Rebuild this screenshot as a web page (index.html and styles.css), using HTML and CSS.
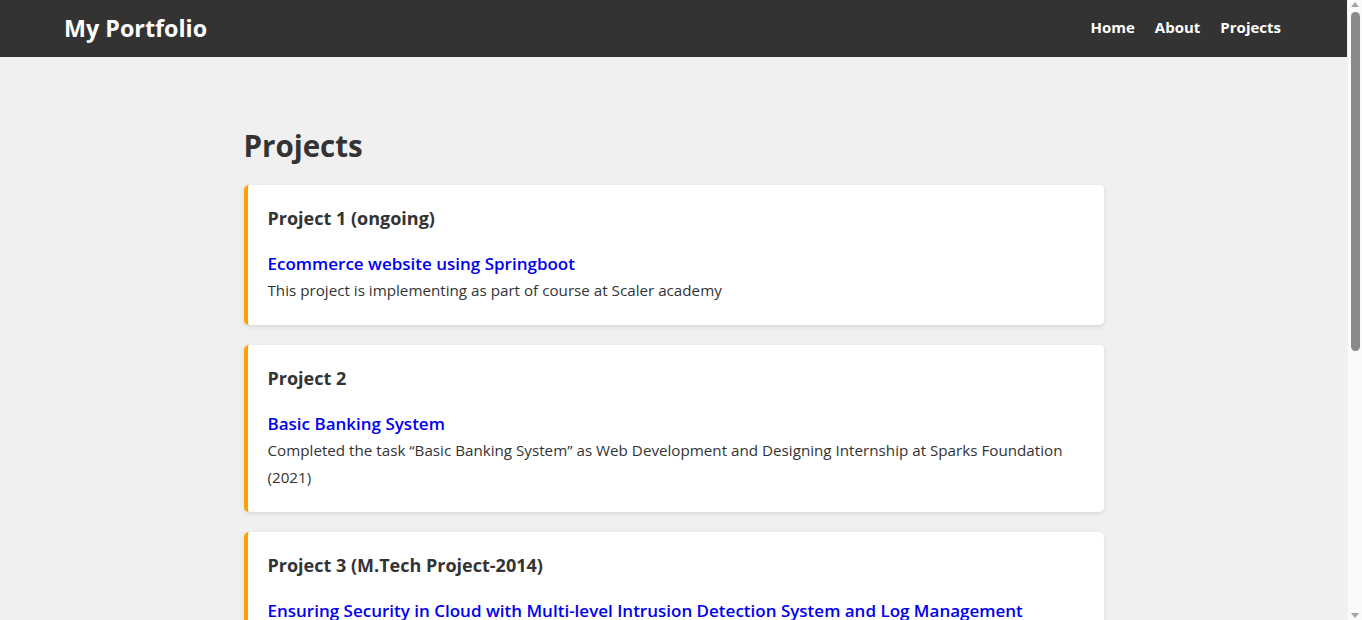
FILE: index.html
```html
<!DOCTYPE html>
<html lang="en">
<head>
<meta charset="utf-8">
<title>My Portfolio</title>
<link rel="stylesheet" href="styles.css">
</head>
<body>
<header class="site-header">
  <div class="logo">My Portfolio</div>
  <nav class="nav">
    <a href="#">Home</a>
    <a href="#">About</a>
    <a href="#">Projects</a>
  </nav>
</header>
<main class="main">
  <h2 class="page-title">Projects</h2>
  <section class="card">
    <h3 class="card-title">Project 1 (ongoing)</h3>
    <a class="card-link" href="#">Ecommerce website using Springboot</a>
    <p class="card-text">This project is implementing as part of course at Scaler academy</p>
  </section>
  <section class="card">
    <h3 class="card-title">Project 2</h3>
    <a class="card-link" href="#">Basic Banking System</a>
    <p class="card-text">Completed the task “Basic Banking System” as Web Development and Designing Internship at Sparks Foundation (2021)</p>
  </section>
  <section class="card">
    <h3 class="card-title">Project 3 (M.Tech Project-2014)</h3>
    <a class="card-link" href="#">Ensuring Security in Cloud with Multi-level Intrusion Detection System and Log Management</a>
    <p class="card-text">Developed a multi-level intrusion detection system with log management to ensure security of cloud environments.</p>
  </section>
</main>
<div class="scrollbar" aria-hidden="true">
  <span class="scroll-arrow up"></span>
  <span class="scroll-thumb"></span>
  <span class="scroll-arrow down"></span>
</div>
</body>
</html>
```

FILE: styles.css
```css
html, body {
  margin: 0;
  padding: 0;
}
body {
  background: #f0f0f0;
  font-family: "Open Sans", "Noto Sans", sans-serif;
  color: #333;
  padding-right: 15px;
}
.site-header {
  background: #333;
  height: 57px;
  padding: 0 64px;
  display: flex;
  align-items: center;
  justify-content: space-between;
  box-sizing: border-box;
}
.logo {
  color: #fff;
  font-weight: 700;
  font-size: 23.3px;
  line-height: 1;
}
.nav {
  display: flex;
  gap: 20px;
  padding: 0 2px 3px 0;
}
.nav a {
  color: #fff;
  text-decoration: none;
  font-weight: 700;
  font-size: 15px;
  line-height: 20px;
}
.main {
  max-width: 860px;
  margin: 0 auto;
  padding: 69px 0 40px;
}
.page-title {
  margin: 0 0 19px;
  font-size: 29.5px;
  line-height: 40px;
  font-weight: 700;
  color: #333;
}
.card {
  background: #fff;
  border-left: 4px solid #ffa000;
  border-radius: 5px;
  box-shadow: 0 2px 5px rgba(0, 0, 0, 0.1);
  padding: 20px;
  margin-bottom: 20px;
}
.card-title {
  margin: 0 0 20px;
  font-size: 18px;
  line-height: 26px;
  font-weight: 700;
  color: #333;
}
.card-link {
  display: block;
  color: #0000f0;
  text-decoration: none;
  font-size: 17px;
  line-height: 26px;
  font-weight: 600;
}
.card-text {
  margin: 0;
  font-size: 15.2px;
  line-height: 27.5px;
  color: #333;
}
.scrollbar {
  position: fixed;
  top: 0;
  right: 0;
  width: 15px;
  height: 100vh;
  background: #fafafa;
  border-left: 1px solid #f0f0f0;
  box-sizing: border-box;
}
.scroll-thumb {
  position: absolute;
  top: 12px;
  left: 3px;
  width: 9px;
  height: 339px;
  border-radius: 5px;
  background: #8a8a8a;
}
.scroll-arrow {
  position: absolute;
  left: 3px;
  width: 0;
  height: 0;
  border-left: 4.5px solid transparent;
  border-right: 4.5px solid transparent;
}
.scroll-arrow.up {
  top: 2px;
  border-bottom: 5px solid #a3a3a3;
}
.scroll-arrow.down {
  bottom: 2px;
  border-top: 5px solid #a3a3a3;
}
```
